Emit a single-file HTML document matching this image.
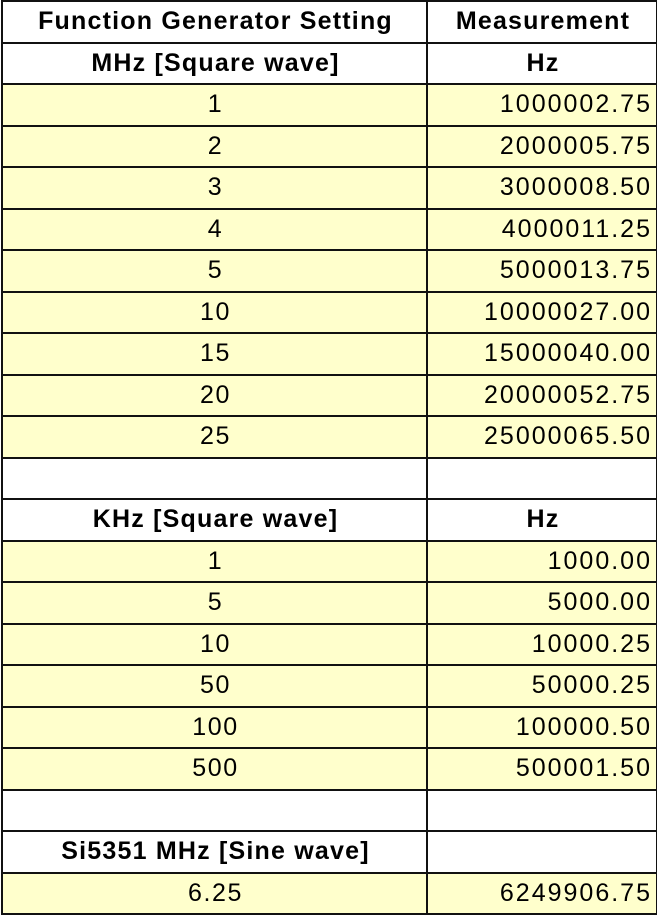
<!DOCTYPE html>
<html><head><style>
body{margin:0;background:#fff;}
table{position:absolute;left:1px;top:0;width:655px;height:915px;border-collapse:collapse;table-layout:fixed;font-family:"Liberation Sans",sans-serif;font-size:25px;color:#000;letter-spacing:1.6px;}
td{border:2px solid #111;padding:0 4px 0 6px;height:39px;line-height:25px;text-align:center;white-space:nowrap;overflow:hidden;}
td.r{text-align:right;letter-spacing:2px;}
tr.y td{background:#FFFFCC;}
tr.h td{font-weight:bold;letter-spacing:1.2px;}
</style></head><body>
<table>
<colgroup><col style="width:425px"><col style="width:230px"></colgroup>
<tr class="h"><td>Function Generator Setting</td><td>Measurement</td></tr>
<tr class="h"><td>MHz [Square wave]</td><td>Hz</td></tr>
<tr class="y"><td>1</td><td class="r">1000002.75</td></tr>
<tr class="y"><td>2</td><td class="r">2000005.75</td></tr>
<tr class="y"><td>3</td><td class="r">3000008.50</td></tr>
<tr class="y"><td>4</td><td class="r">4000011.25</td></tr>
<tr class="y"><td>5</td><td class="r">5000013.75</td></tr>
<tr class="y"><td>10</td><td class="r">10000027.00</td></tr>
<tr class="y"><td>15</td><td class="r">15000040.00</td></tr>
<tr class="y"><td>20</td><td class="r">20000052.75</td></tr>
<tr class="y"><td>25</td><td class="r">25000065.50</td></tr>
<tr><td></td><td></td></tr>
<tr class="h"><td>KHz [Square wave]</td><td>Hz</td></tr>
<tr class="y"><td>1</td><td class="r">1000.00</td></tr>
<tr class="y"><td>5</td><td class="r">5000.00</td></tr>
<tr class="y"><td>10</td><td class="r">10000.25</td></tr>
<tr class="y"><td>50</td><td class="r">50000.25</td></tr>
<tr class="y"><td>100</td><td class="r">100000.50</td></tr>
<tr class="y"><td>500</td><td class="r">500001.50</td></tr>
<tr><td></td><td></td></tr>
<tr class="h"><td>Si5351 MHz [Sine wave]</td><td></td></tr>
<tr class="y"><td>6.25</td><td class="r">6249906.75</td></tr>
</table>
</body></html>
